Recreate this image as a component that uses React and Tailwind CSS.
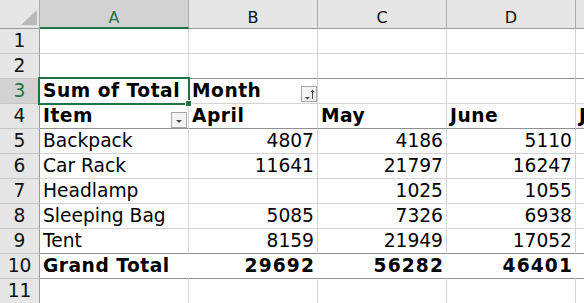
import React from "react";

function FilterBtn({ sort, className }) {
  return (
    <div
      className={
        "absolute w-[16px] h-[16px] border border-[#a8a8a8] bg-[#f4f4f4] " + className
      }
    >
      {sort ? (
        <svg width="14" height="14" viewBox="0 0 14 14" className="absolute left-0 top-0">
          <polygon points="3,10 8,10 5.5,12.5" fill="#4a4a4a" />
          <line x1="10.5" y1="3" x2="10.5" y2="12" stroke="#4a4a4a" strokeWidth="1" />
          <polygon points="8.5,5 12.5,5 10.5,2.5" fill="#4a4a4a" />
        </svg>
      ) : (
        <svg width="14" height="14" viewBox="0 0 14 14" className="absolute left-0 top-0">
          <polygon points="4,7 10,7 7,10" fill="#4a4a4a" />
        </svg>
      )}
    </div>
  );
}

const rows = [
  { n: 1, cells: ["", "", "", "", ""] },
  { n: 2, cells: ["", "", "", "", ""], dark: true },
  { n: 3, cells: ["Sum of Total", "Month", "", "", ""], boldAll: true, sel: true },
  { n: 4, cells: ["Item", "April", "May", "June", "July"], boldAll: true, dark: true },
  { n: 5, cells: ["Backpack", "4807", "4186", "5110", ""] },
  { n: 6, cells: ["Car Rack", "11641", "21797", "16247", ""] },
  { n: 7, cells: ["Headlamp", "", "1025", "1055", ""] },
  { n: 8, cells: ["Sleeping Bag", "5085", "7326", "6938", ""] },
  { n: 9, cells: ["Tent", "8159", "21949", "17052", ""], dark: true },
  { n: 10, cells: ["Grand Total", "29692", "56282", "46401", ""], boldAll: true, total: true, dark: true },
  { n: 11, cells: ["", "", "", "", ""] },
];

export default function App() {
  return (
    <div className="relative w-[584px] h-[303px] overflow-hidden bg-white font-['DejaVu_Sans',Verdana,sans-serif] text-black">
      <div className="grid grid-cols-[40px_149px_129px_129px_129px_200px] grid-rows-[29px_repeat(11,25px)]">
        <div className="relative bg-[#e6e6e6] border-r border-b border-r-[#ababab] border-b-[#9b9b9b]">
          <svg width="40" height="29" className="absolute left-0 top-0">
            <polygon points="37,10 37,25 21,25" fill="#b9b9b9" />
          </svg>
        </div>
        <div className="bg-[#d2d2d2] border-r border-r-[#ababab] border-b-2 border-b-[#217346] text-center text-[16px] leading-[20px] pt-[8px] text-[#217346]">
          A
        </div>
        {["B", "C", "D", "E"].map((l) => (
          <div
            key={l}
            className="bg-[#e6e6e6] border-r border-r-[#ababab] border-b border-b-[#9b9b9b] text-center text-[16px] leading-[20px] pt-[8px] text-[#111]"
          >
            {l}
          </div>
        ))}
        {rows.map((r) => (
          <React.Fragment key={r.n}>
            <div
              className={
                "border-r border-b text-center text-[18.67px] leading-[24px] " +
                (r.sel
                  ? "bg-[#d2d2d2] text-[#217346] border-r-[#217346] border-b-[#c6c6c6]"
                  : "bg-[#e6e6e6] text-[#111] border-r-[#9b9b9b] border-b-[#c6c6c6]")
              }
            >
              {r.n}
            </div>
            {r.cells.map((c, i) => {
              const isNum = /^\d+$/.test(c);
              const bold = r.boldAll;
              let cls =
                "relative border-r border-b whitespace-nowrap text-[18.67px] leading-[24px] " +
                (r.total ? "border-r-white " : "border-r-[#d4d4d4] ") +
                (r.dark ? "border-b-[#8f8f8f] " : "border-b-[#d4d4d4] ");
              if (isNum && bold) cls += "text-right pr-[2px] font-bold tracking-[1.1px] ";
              else if (isNum) cls += "text-right pr-[3px] ";
              else if (bold) cls += "text-left pl-[3px] font-bold tracking-[0.5px] ";
              else cls += "text-left pl-[3px] ";
              return (
                <div key={i} className={cls}>
                  {c}
                  {r.n === 4 && i === 0 && <FilterBtn className="right-[1px] bottom-0" />}
                  {r.n === 3 && i === 1 && <FilterBtn sort className="right-0 bottom-[1px]" />}
                </div>
              );
            })}
          </React.Fragment>
        ))}
      </div>
      <div className="absolute left-[38px] top-[77px] w-[152px] h-[28px] border-2 border-[#217346]" />
      <div className="absolute left-[185px] top-[100px] w-[7px] h-[7px] bg-[#217346] border border-white" />
    </div>
  );
}
